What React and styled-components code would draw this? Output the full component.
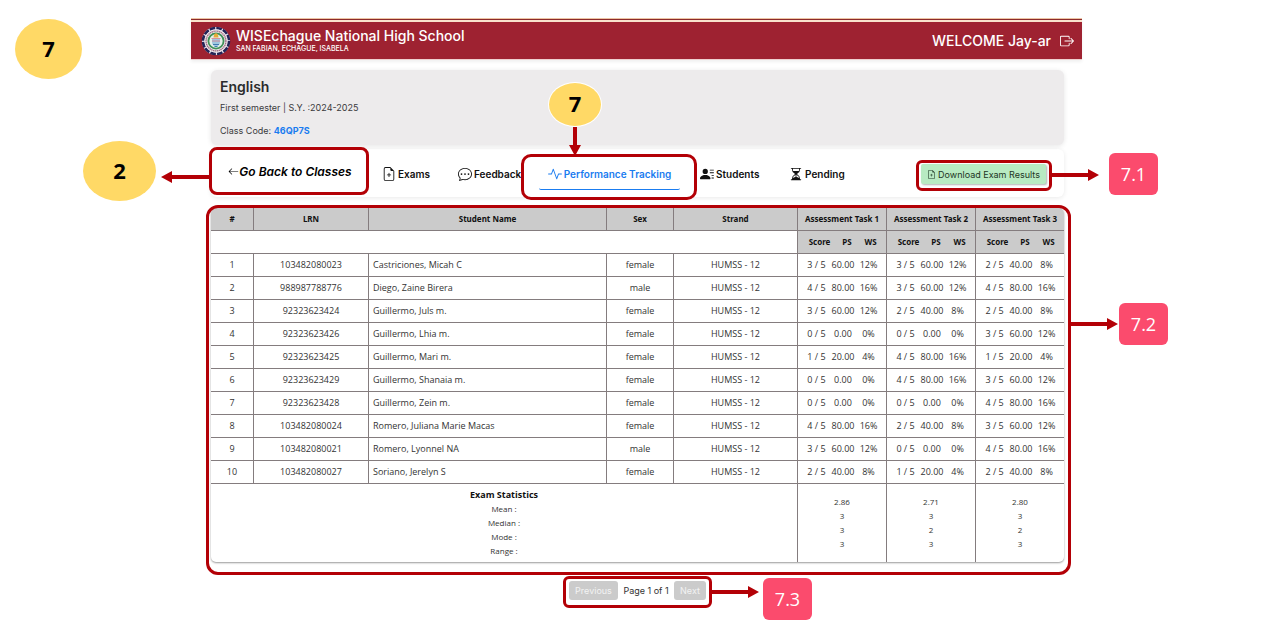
import React from "react";
import styled, { createGlobalStyle } from "styled-components";
import {
  BsActivity,
  BsArrowLeft,
  BsBoxArrowRight,
  BsChatDots,
  BsFileEarmarkPlus,
  BsHourglassSplit,
  BsPersonLinesFill,
} from "react-icons/bs";

const RED = "#b30006";
const UI = `Inter, "Liberation Sans", sans-serif`;
const DATA = `"Open Sans", "Noto Sans", sans-serif`;

const GlobalStyle = createGlobalStyle`
  *, *::before, *::after { box-sizing: border-box; }
  body { margin: 0; background: #fff; color: #333; font-family: ${UI}; overflow-x: hidden; }
  h1, h2, p { margin: 0; }
`;

const Page = styled.div`
  position: relative;
  padding: 18px 198px 20px 191px;
`;

const Header = styled.header`
  display: flex;
  align-items: center;
  gap: 5px;
  height: 42px;
  padding: 4px 8px 0 10px;
  color: #fff;
  background: linear-gradient(#ecc4a4 1px, #8d2a2a 1px 2px, #f8e2cc 2px 4px, #9e2231 4px);
  border-bottom: 1px solid #efd0d0;
  box-shadow: 0 2px 3px rgba(0, 0, 0, 0.06);
`;

const Brand = styled.div`
  flex: 1;
`;

const SchoolName = styled.h1`
  font-size: 14px;
  line-height: 16px;
  font-weight: 500;
`;

const Address = styled.p`
  font-size: 7px;
  line-height: 9px;
  font-weight: 500;
`;

const Welcome = styled.span`
  font-size: 14px;
  font-weight: 500;
`;

const IconButton = styled.button`
  display: flex;
  padding: 0;
  margin-left: 4px;
  border: 0;
  background: none;
  color: #fff;
  font-size: 14px;
`;

const Content = styled.main`
  padding: 10px 18px 0 20px;
`;

const ClassCard = styled.section`
  height: 75px;
  padding: 8px 9px;
  border-radius: 6px;
  background: #edebec;
  box-shadow: 0 1px 5px rgba(0, 0, 0, 0.1);
`;

const ClassName = styled.h2`
  font-size: 14px;
  line-height: 18px;
  font-weight: 600;
  color: #2b2b2d;
`;

const ClassLine = styled.p`
  margin-top: ${(p) => p.$gap}px;
  font-size: 9px;
  line-height: 12px;
  color: #3a3a3c;
  strong { color: #1a7cf0; font-weight: 700; }
`;

const Nav = styled.nav`
  display: grid;
  grid-template-columns: 171px 76px 81px 161px 89px 1fr auto;
  align-items: center;
  height: 48px;
  margin: 4px 0 11px;
  padding-right: 18px;
  border-radius: 6px;
  box-shadow: 0 1px 5px rgba(0, 0, 0, 0.09);
`;

const BackArea = styled.div`
  position: relative;
  width: 158px;
  height: 44px;
  margin-bottom: 6px;
  display: flex;
  align-items: center;
  justify-content: center;
`;

const BackLink = styled.a`
  display: flex;
  align-items: center;
  color: #000;
  font-size: 12px;
  font-style: italic;
  font-weight: 600;
  text-decoration: none;
  white-space: nowrap;
  svg { font-size: 11px; }
`;

const Tab = styled.a`
  display: flex;
  align-items: center;
  gap: 2px;
  color: #111;
  font-size: 10px;
  font-weight: 600;
  text-decoration: none;
  white-space: nowrap;
  svg { font-size: 14px; flex: none; }
`;

const ActiveTab = styled(Tab)`
  position: relative;
  width: 141px;
  height: 31px;
  justify-content: center;
  color: #1a7cf0;
  &::after {
    content: "";
    position: absolute;
    inset: auto 0 0;
    height: 4px;
    border-bottom: 1px solid #1a7cf0;
    border-radius: 3px;
  }
`;

const Anchor = styled.div`
  position: relative;
`;

const Download = styled.button`
  display: flex;
  align-items: center;
  justify-content: center;
  gap: 2px;
  width: 125px;
  height: 20px;
  padding: 0;
  border: 0;
  border-radius: 2px;
  background: #b8eac2;
  box-shadow: 1px 1px 2px rgba(0, 0, 0, 0.3);
  color: #1d3524;
  font-family: ${UI};
  font-size: 9px;
  white-space: nowrap;
`;

const Table = styled.table`
  width: 100%;
  table-layout: fixed;
  border-collapse: separate;
  border-spacing: 0;
  border-radius: 5px;
  overflow: hidden;
  box-shadow: 0 1px 2px rgba(0, 0, 0, 0.4);
  font-family: ${DATA};
  font-size: 9px;
  line-height: 12px;
  color: #333;
`;

const Cell = styled.td`
  height: 23px;
  padding: 0 ${(p) => p.$right || 0}px 0 ${(p) => p.$left || 0}px;
  border-bottom: 1px solid #847c7e;
  border-right: ${(p) => (p.$line ? "1px solid #847c7e" : "0")};
  text-align: ${(p) => p.$align || "center"};
  white-space: nowrap;
`;

const HeadCell = styled(Cell)`
  height: ${(p) => p.$height || 23}px;
  background: #cbcbcb;
  color: #111;
  font-family: "Noto Sans", ${DATA};
  font-size: 8px;
  font-weight: 700;
`;

const StatCell = styled.td`
  height: 78px;
  padding: 0;
  border-right: ${(p) => (p.$line ? "1px solid #847c7e" : "0")};
  text-align: center;
  white-space: pre-line;
  font-size: 8px;
  line-height: 14px;
  strong { font-size: 9px; color: #111; }
`;

const Pager = styled.div`
  display: flex;
  justify-content: center;
  margin-top: 19px;
`;

const PagerGroup = styled.div`
  position: relative;
  display: flex;
  align-items: center;
  justify-content: space-between;
  width: 137px;
  font-size: 9px;
  white-space: nowrap;
`;

const PagerButton = styled.button`
  width: ${(p) => p.$width}px;
  height: 19px;
  padding: 0;
  border: 0;
  border-radius: 3px;
  background: #cbcbcb;
  color: #f3f3f3;
  font-family: ${UI};
  font-size: 9px;
`;

const Frame = styled.div`
  position: absolute;
  z-index: 2;
  inset: ${(p) => p.$inset};
  border: 3px solid ${RED};
  border-radius: ${(p) => p.$radius || 8}px;
  pointer-events: none;
`;

const ArrowSvg = styled.svg`
  position: absolute;
  inset: ${(p) => p.$inset};
`;

const Badge = styled.span`
  position: absolute;
  inset: ${(p) => p.$inset};
  width: 49px;
  height: 42px;
  border-radius: 6px;
  background: #fb4b6d;
  color: #fff;
  font: 18px/42px ${DATA};
  text-align: center;
`;

const Marker = styled.span`
  position: absolute;
  inset: ${(p) => p.$inset};
  display: flex;
  align-items: center;
  justify-content: center;
  width: ${(p) => p.$width}px;
  height: ${(p) => p.$height}px;
  padding-bottom: 2px;
  border-radius: 50%;
  background: #ffd966;
  color: #000;
  font: 700 22px/24px ${DATA};
  box-shadow: ${(p) => (p.$ring ? "0 0 0 1px #fff" : "none")};
`;

function RightArrow({ inset }) {
  return (
    <ArrowSvg $inset={inset} width="49" height="12" fill={RED} aria-hidden="true">
      <path d="M0 4h38V0l11 6-11 6V8H0z" />
    </ArrowSvg>
  );
}

function LeftArrow({ inset }) {
  return (
    <ArrowSvg $inset={inset} width="49" height="12" fill={RED} aria-hidden="true">
      <path d="M49 4H11V0L0 6l11 6V8h38z" />
    </ArrowSvg>
  );
}

function DownArrow({ inset }) {
  return (
    <ArrowSvg $inset={inset} width="12" height="29" fill={RED} aria-hidden="true">
      <path d="M4 0v18H0l6 11 6-11H8V0z" />
    </ArrowSvg>
  );
}

function Seal() {
  return (
    <svg width="30" height="30" viewBox="0 0 30 30" aria-hidden="true">
      <circle cx="15" cy="15" r="14" fill="#e9e5ee" />
      <circle cx="15" cy="15" r="13" fill="none" stroke="#252457" strokeWidth="2.6" strokeDasharray="5.6 1.2" />
      <circle cx="15" cy="15" r="11.4" fill="#f0e6ea" />
      <circle cx="15" cy="15" r="9.9" fill="none" stroke="#9b6b80" strokeWidth="1.3" strokeDasharray="1.4 0.5" />
      <circle cx="15" cy="15" r="7.6" fill="#e4f0ea" stroke="#3f9058" strokeWidth="1.8" />
      <path d="M11 13h8v3c0 3-2 4-4 5-2-1-4-2-4-5z" fill="#9fc7df" />
      <path d="M10.500 12.500h9M11 15h8" stroke="#d68591" strokeWidth="0.9" />
      <path d="M12.500 11.500l.5-3 2-1.500 2 1.500.5 3z" fill="#e5ac37" />
      <path d="M12 18.500h6M13.500 20.500h3" stroke="#3674aa" strokeWidth="0.9" />
    </svg>
  );
}

const columns = [43, 115, 238, 67, 124, 33, 26, 30, 33, 26, 30, 33, 26, 29];
const tasks = ["Assessment Task 1", "Assessment Task 2", "Assessment Task 3"];

const students = [
  ["103482080023", "Castriciones, Micah C", "female", [3, 3, 2]],
  ["988987788776", "Diego, Zaine Birera", "male", [4, 3, 4]],
  ["92323623424", "Guillermo, Juls m.", "female", [3, 2, 2]],
  ["92323623426", "Guillermo, Lhia m.", "female", [0, 0, 3]],
  ["92323623425", "Guillermo, Mari m.", "female", [1, 4, 1]],
  ["92323623429", "Guillermo, Shanaia m.", "female", [0, 4, 3]],
  ["92323623428", "Guillermo, Zein m.", "female", [0, 0, 4]],
  ["103482080024", "Romero, Juliana Marie Macas", "female", [4, 2, 3]],
  ["103482080021", "Romero, Lyonnel NA", "male", [3, 0, 4]],
  ["103482080027", "Soriano, Jerelyn S", "female", [2, 1, 2]],
];

const stats = [
  ["2.86", "3", "3", "3"],
  ["2.71", "3", "2", "3"],
  ["2.80", "3", "2", "3"],
];

function ResultsTable() {
  return (
    <Table>
      <colgroup>
        {columns.map((w, i) => (
          <col key={i} width={w} />
        ))}
      </colgroup>
      <thead>
        <tr>
          {["#", "LRN", "Student Name", "Sex", "Strand"].map((h) => (
            <HeadCell as="th" key={h} $line>{h}</HeadCell>
          ))}
          {tasks.map((t, i) => (
            <HeadCell as="th" key={t} colSpan={3} $line={i < 2}>{t}</HeadCell>
          ))}
        </tr>
        <tr>
          <Cell colSpan={5} $line />
          {tasks.map((t, i) => (
            <React.Fragment key={t}>
              <HeadCell as="th" $height={22} $left={10}>Score</HeadCell>
              <HeadCell as="th" $height={22} $left={6}>PS</HeadCell>
              <HeadCell as="th" $height={22} $right={2} $line={i < 2}>WS</HeadCell>
            </React.Fragment>
          ))}
        </tr>
      </thead>
      <tbody>
        {students.map(([lrn, name, sex, scores], row) => (
          <tr key={lrn}>
            <Cell $line>{row + 1}</Cell>
            <Cell $line>{lrn}</Cell>
            <Cell $line $align="left" $left={4}>{name}</Cell>
            <Cell $line>{sex}</Cell>
            <Cell $line>HUMSS - 12</Cell>
            {scores.map((s, i) => (
              <React.Fragment key={i}>
                <Cell $left={4}>{s} / 5</Cell>
                <Cell $right={2}>{(s * 20).toFixed(2)}</Cell>
                <Cell $right={6} $line={i < 2}>{s * 4}%</Cell>
              </React.Fragment>
            ))}
          </tr>
        ))}
      </tbody>
      <tfoot>
        <tr>
          <StatCell colSpan={5} $line>
            <strong>Exam Statistics</strong>
            {"\nMean :\nMedian :\nMode :\nRange :"}
          </StatCell>
          {stats.map((values, i) => (
            <StatCell key={i} colSpan={3} $line={i < 2}>{values.join("\n")}</StatCell>
          ))}
        </tr>
      </tfoot>
    </Table>
  );
}

export default function App() {
  return (
    <>
      <GlobalStyle />
      <Page>
        <Marker $inset="19px auto auto 15px" $width={67} $height={60}>7</Marker>
        <Header>
          <Seal />
          <Brand>
            <SchoolName>WISEchague National High School</SchoolName>
            <Address>SAN FABIAN, ECHAGUE, ISABELA</Address>
          </Brand>
          <Welcome>WELCOME Jay-ar</Welcome>
          <IconButton aria-label="Log out"><BsBoxArrowRight /></IconButton>
        </Header>
        <Content>
          <ClassCard>
            <ClassName>English</ClassName>
            <ClassLine $gap={6}>First semester | S.Y. :2024-2025</ClassLine>
            <ClassLine $gap={11}>Class Code: <strong>46QP7S</strong></ClassLine>
          </ClassCard>
          <Nav>
            <BackArea>
              <BackLink href="#classes"><BsArrowLeft />Go Back to Classes</BackLink>
              <Frame $inset="-2px 0 -2px -2px">
                <LeftArrow inset="21px auto auto -51px" />
                <Marker $inset="-9px auto auto -129px" $width={73} $height={60}>2</Marker>
              </Frame>
            </BackArea>
            <Tab href="#exams"><BsFileEarmarkPlus />Exams</Tab>
            <Tab href="#feedback"><BsChatDots />Feedback</Tab>
            <ActiveTab href="#performance">
              <BsActivity />Performance Tracking
              <Frame $inset="-5px -17px -10px -18px" $radius={10}>
                <DownArrow inset="-30px auto auto 45px" />
                <Marker $inset="-74px auto auto 25px" $width={52} $height={43} $ring>7</Marker>
              </Frame>
            </ActiveTab>
            <Tab href="#students"><BsPersonLinesFill />Students</Tab>
            <Tab href="#pending"><BsHourglassSplit />Pending</Tab>
            <Anchor>
              <Download><BsFileEarmarkPlus />Download Exam Results</Download>
              <Frame $inset="-4px -6px -7px -5px" $radius={6}>
                <RightArrow inset="6px -50px auto auto" />
                <Badge $inset="-10px -109px auto auto">7.1</Badge>
              </Frame>
            </Anchor>
          </Nav>
          <Anchor>
            <ResultsTable />
            <Frame $inset="-3px -7px -13px -5px" $radius={12}>
              <RightArrow inset="110px -50px auto auto" />
              <Badge $inset="95px -100px auto auto">7.2</Badge>
            </Frame>
          </Anchor>
          <Pager>
            <PagerGroup>
              <PagerButton $width={49} disabled>Previous</PagerButton>
              <span>Page 1 of 1</span>
              <PagerButton $width={32} disabled>Next</PagerButton>
              <Frame $inset="-5px -6px -8px -6px" $radius={6}>
                <RightArrow inset="7px -50px auto auto" />
                <Badge $inset="-1px -103px auto auto">7.3</Badge>
              </Frame>
            </PagerGroup>
          </Pager>
        </Content>
      </Page>
    </>
  );
}
